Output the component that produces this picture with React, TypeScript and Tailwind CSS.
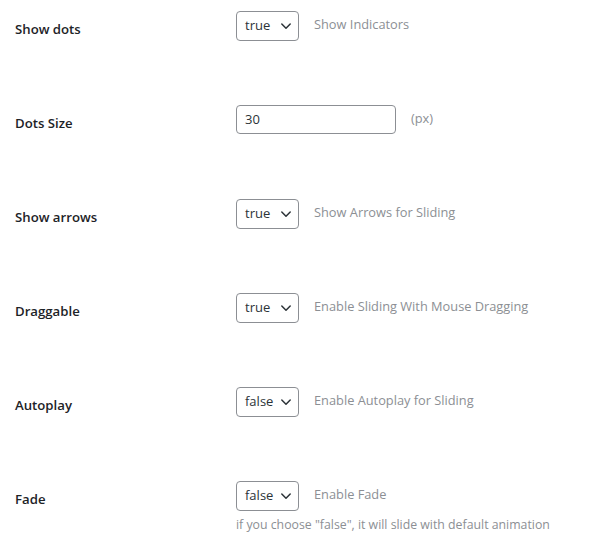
import React from "react"

type Row = {
	label: string
	kind: "select" | "input"
	value: string
	desc: string
	note?: string
}

const rows: Row[] = [
	{ label: "Show dots", kind: "select", value: "true", desc: "Show Indicators" },
	{ label: "Dots Size", kind: "input", value: "30", desc: "(px)" },
	{ label: "Show arrows", kind: "select", value: "true", desc: "Show Arrows for Sliding" },
	{ label: "Draggable", kind: "select", value: "true", desc: "Enable Sliding With Mouse Dragging" },
	{ label: "Autoplay", kind: "select", value: "false", desc: "Enable Autoplay for Sliding" },
	{
		label: "Fade",
		kind: "select",
		value: "false",
		desc: "Enable Fade",
		note: 'if you choose "false", it will slide with default animation',
	},
]

function Chevron() {
	return (
		<svg width="12" height="12" viewBox="0 0 12 12" fill="none" className="shrink-0">
			<path d="M1.8 4l4.2 4.2 4.2-4.2" stroke="#2c3338" strokeWidth="1.5" strokeLinecap="round" strokeLinejoin="round" />
		</svg>
	)
}

function SelectBox({ value }: { value: string }) {
	return (
		<div className="flex h-[30px] w-[63px] items-center justify-between rounded-[4px] border border-[#8c8f94] bg-white pl-[8px] pr-[6px] text-[13px] text-[#2c3338]">
			<span>{value}</span>
			<Chevron />
		</div>
	)
}

function InputBox({ value }: { value: string }) {
	return (
		<div className="flex h-[29px] w-[160px] items-center rounded-[4px] border border-[#8c8f94] bg-white pl-[8px] text-[13px] text-[#2c3338]">
			{value}
		</div>
	)
}

export default function App() {
	return (
		<div className="min-h-screen bg-white font-['Open_Sans',sans-serif]">
			{rows.map((row) => (
				<div key={row.label} className="flex h-[94px]">
					<div className="w-[236px] pl-[15px] pt-[20px] text-[13.2px] font-semibold leading-[18px] text-[#1d2327]">
						{row.label}
					</div>
					<div className="pt-[11px]">
						<div className="flex items-start">
							{row.kind === "select" ? <SelectBox value={row.value} /> : <InputBox value={row.value} />}
							<span className="ml-[15px] mt-[4px] text-[12.8px] leading-[18px] text-[#8c8f94]">{row.desc}</span>
						</div>
						{row.note && (
							<p className="mt-[5px] text-[12.3px] leading-[18px] text-[#8c8f94]">{row.note}</p>
						)}
					</div>
				</div>
			))}
		</div>
	)
}
